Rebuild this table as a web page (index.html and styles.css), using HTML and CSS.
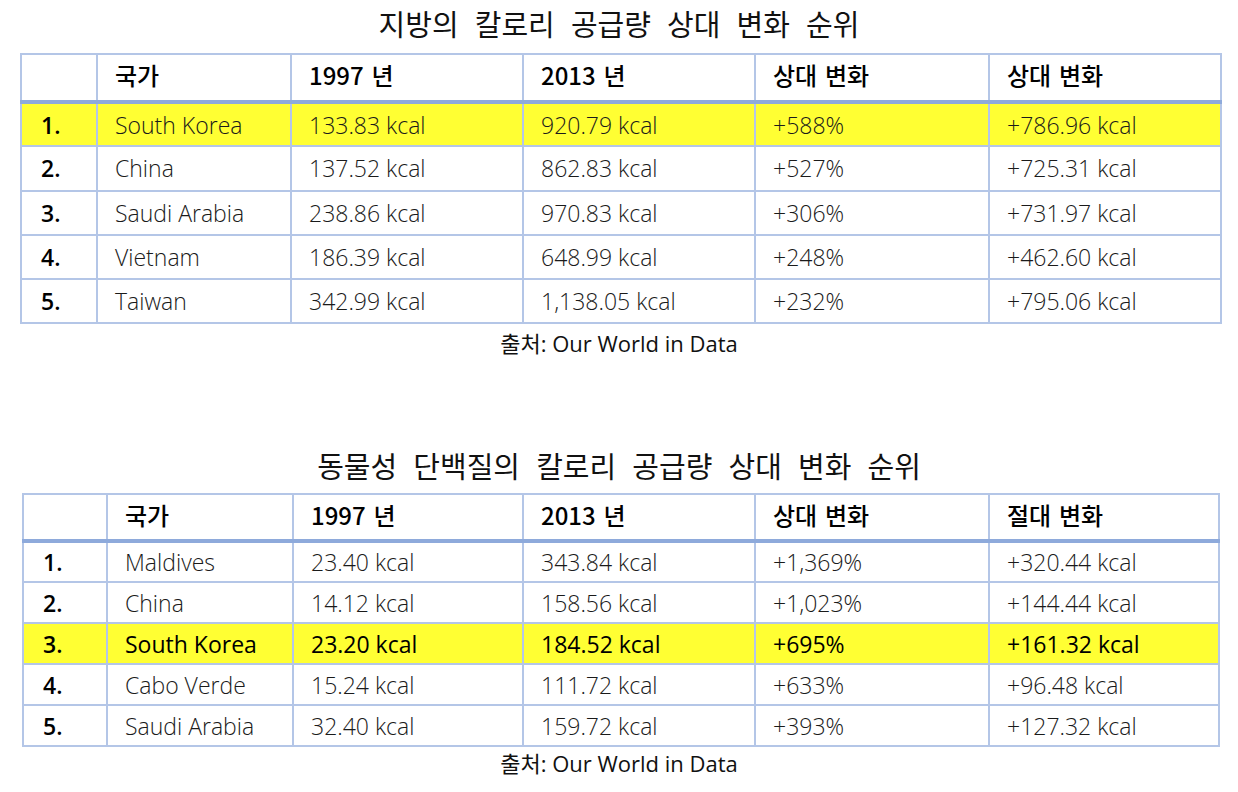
FILE: index.html
```html
<!DOCTYPE html>
<html lang="ko">
<head>
<meta charset="utf-8">
<title>칼로리 공급량 상대 변화 순위</title>
<link rel="stylesheet" href="styles.css">
</head>
<body>
<main class="page">
  <section class="block block-fat">
    <h2 class="title">지방의 칼로리 공급량 상대 변화 순위</h2>
    <table class="rank t1">
      <colgroup><col class="c-no"><col class="c-country"><col class="c-a"><col class="c-b"><col class="c-c"><col class="c-d"></colgroup>
      <thead>
        <tr><th></th><th>국가</th><th>1997 년</th><th>2013 년</th><th>상대 변화</th><th>상대 변화</th></tr>
      </thead>
      <tbody>
        <tr class="hl"><td class="no">1.</td><td>South Korea</td><td>133.83 kcal</td><td>920.79 kcal</td><td>+588%</td><td>+786.96 kcal</td></tr>
        <tr><td class="no">2.</td><td>China</td><td>137.52 kcal</td><td>862.83 kcal</td><td>+527%</td><td>+725.31 kcal</td></tr>
        <tr><td class="no">3.</td><td>Saudi Arabia</td><td>238.86 kcal</td><td>970.83 kcal</td><td>+306%</td><td>+731.97 kcal</td></tr>
        <tr><td class="no">4.</td><td>Vietnam</td><td>186.39 kcal</td><td>648.99 kcal</td><td>+248%</td><td>+462.60 kcal</td></tr>
        <tr><td class="no">5.</td><td>Taiwan</td><td>342.99 kcal</td><td>1,138.05 kcal</td><td>+232%</td><td>+795.06 kcal</td></tr>
      </tbody>
    </table>
    <p class="source">출처: Our World in Data</p>
  </section>

  <section class="block block-protein">
    <h2 class="title">동물성 단백질의 칼로리 공급량 상대 변화 순위</h2>
    <table class="rank t2">
      <colgroup><col class="c-no"><col class="c-country"><col class="c-a"><col class="c-b"><col class="c-c"><col class="c-d"></colgroup>
      <thead>
        <tr><th></th><th>국가</th><th>1997 년</th><th>2013 년</th><th>상대 변화</th><th>절대 변화</th></tr>
      </thead>
      <tbody>
        <tr><td class="no">1.</td><td>Maldives</td><td>23.40 kcal</td><td>343.84 kcal</td><td>+1,369%</td><td>+320.44 kcal</td></tr>
        <tr><td class="no">2.</td><td>China</td><td>14.12 kcal</td><td>158.56 kcal</td><td>+1,023%</td><td>+144.44 kcal</td></tr>
        <tr class="hl strong"><td class="no">3.</td><td>South Korea</td><td>23.20 kcal</td><td>184.52 kcal</td><td>+695%</td><td>+161.32 kcal</td></tr>
        <tr><td class="no">4.</td><td>Cabo Verde</td><td>15.24 kcal</td><td>111.72 kcal</td><td>+633%</td><td>+96.48 kcal</td></tr>
        <tr><td class="no">5.</td><td>Saudi Arabia</td><td>32.40 kcal</td><td>159.72 kcal</td><td>+393%</td><td>+127.32 kcal</td></tr>
      </tbody>
    </table>
    <p class="source">출처: Our World in Data</p>
  </section>
</main>
</body>
</html>
```

FILE: styles.css
```css
* { box-sizing: border-box; }

html, body {
  margin: 0;
  padding: 0;
  background: #ffffff;
}

body {
  font-family: "Open Sans", "Noto Sans CJK KR", sans-serif;
  color: #111111;
  width: 1238px;
}

.page {
  display: flex;
  flex-direction: column;
}

.block {
  display: flex;
  flex-direction: column;
}

.block-protein {
  margin-top: 84px;
}

.title {
  margin: 0;
  text-align: center;
  font-family: "Noto Sans CJK KR", sans-serif;
  font-weight: 400;
  font-size: 29px;
  line-height: 46px;
  height: 46px;
  word-spacing: 8px;
  color: #111111;
}

.rank {
  border-collapse: collapse;
  table-layout: fixed;
  margin-top: 7px;
}

.t1 {
  width: 1200px;
  margin-left: 20px;
}

.t2 {
  width: 1196px;
  margin-left: 22px;
  margin-top: 5px;
}

.rank th,
.rank td {
  border: 2px solid #b4c6e7;
  padding: 0 0 0 17px;
  text-align: left;
  vertical-align: middle;
  white-space: nowrap;
  overflow: hidden;
}

.rank th {
  font-family: "Noto Sans CJK KR", sans-serif;
  font-weight: 500;
  font-size: 24px;
  word-spacing: 1px;
  color: #000000;
  border-bottom: 4px solid #8eaadb;
  padding-bottom: 6px;
}

.rank td {
  font-weight: 300;
  font-size: 23px;
  color: #1a1a1a;
}

.rank td.no {
  font-weight: 600;
  color: #000000;
  padding-left: 19px;
}

.t1 th { height: 48px; }
.t1 td { height: 44.3px; }
.t2 th { height: 47px; }
.t2 td { height: 41px; }

.t1 .c-no { width: 76px; }
.t1 .c-country { width: 194px; }
.t1 .c-a { width: 232px; }
.t1 .c-b { width: 232px; }
.t1 .c-c { width: 234px; }
.t1 .c-d { width: 232px; }

.t2 .c-no { width: 84px; }
.t2 .c-country { width: 186px; }
.t2 .c-a { width: 230px; }
.t2 .c-b { width: 232px; }
.t2 .c-c { width: 234px; }
.t2 .c-d { width: 230px; }

.rank tr.hl td {
  background: #ffff33;
}

.rank tr.strong td {
  font-weight: 500;
  color: #000000;
}

.rank tr.strong td.no {
  font-weight: 600;
}

.source {
  margin: 4px 0 0 0;
  text-align: center;
  font-family: "Open Sans", "Noto Sans CJK KR", sans-serif;
  font-size: 22px;
  line-height: 30px;
  color: #111111;
}

.block-protein .source {
  margin-top: 1px;
}
```
